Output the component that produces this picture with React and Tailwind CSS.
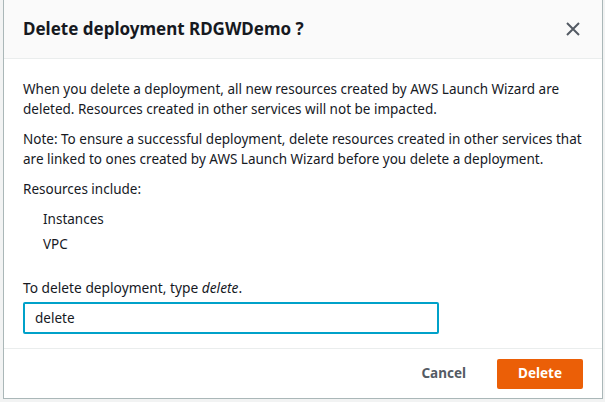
import React from 'react';

export default function App(){
  return (
    <div className="w-[605px] h-[402px] bg-[#f2f3f3] overflow-hidden font-['Noto_Sans','Open_Sans',sans-serif] text-[#16191f]">
      <div className="ml-[3px] w-[600px] h-[399px] flex flex-col bg-white border-x border-b border-[#aab7b8]">
        <div className="h-[59px] shrink-0 flex items-center justify-between pl-[19px] pr-[21px] bg-[#fafafa] border-b border-[#eaeded]">
          <h2 className="text-[17px] font-bold leading-[22px]">Delete deployment RDGWDemo ?</h2>
          <svg width="16" height="16" viewBox="0 0 16 16" fill="none" stroke="#545b64" strokeWidth="2">
            <path d="M2 2 14 14M14 2 2 14" />
          </svg>
        </div>
        <div className="flex-1 pt-[20px] px-[19px] text-[13.5px] leading-[20px]">
          <p>When you delete a deployment, all new resources created by AWS Launch Wizard are deleted. Resources created in other services will not be impacted.</p>
          <p className="mt-[10px]">Note: To ensure a successful deployment, delete resources created in other services that are linked to ones created by AWS Launch Wizard before you delete a deployment.</p>
          <p className="mt-[10px]">Resources include:</p>
          <ul className="mt-[10px] ml-[20px] flex flex-col gap-[5px]">
            <li>Instances</li>
            <li>VPC</li>
          </ul>
          <p className="mt-[24px] text-[13.75px]">To delete deployment, type <em>delete</em>.</p>
          <input readOnly value="delete" className="mt-[4px] block w-[416px] h-[32px] px-[10px] rounded-[2px] border-2 border-[#00a1c9] bg-white text-[13.5px] outline-none" />
        </div>
        <div className="h-[50px] shrink-0 flex items-center justify-end gap-[31px] pr-[19px] border-t border-[#eaeded]">
          <button className="text-[13.5px] font-bold text-[#545b64]">Cancel</button>
          <button className="w-[86px] h-[30px] rounded-[2px] bg-[#eb5f07] text-white text-[13.5px] font-bold">Delete</button>
        </div>
      </div>
    </div>
  );
}
